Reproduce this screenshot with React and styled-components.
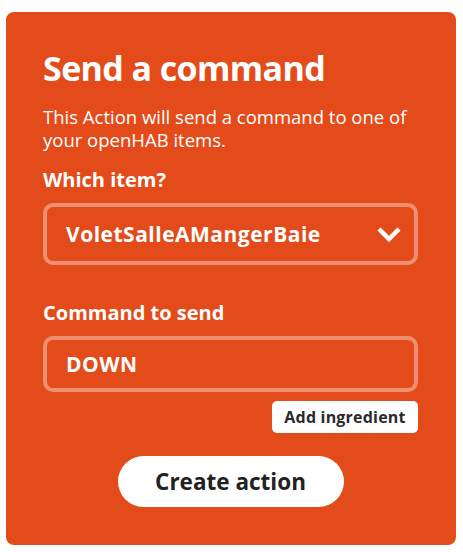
import React from 'react';
import styled, { createGlobalStyle } from 'styled-components';

const GlobalStyle = createGlobalStyle`
  html, body {
    margin: 0;
    padding: 0;
    background: #ffffff;
  }
  body {
    font-family: "Open Sans", Lato, "Liberation Sans", sans-serif;
    -webkit-font-smoothing: antialiased;
  }
`

const Page = styled.div`
  padding: 12px 7px 7px 6px;
`
const Card = styled.form`
  background: #e44b1a;
  border-radius: 8px;
  padding: 36px 38px 38px 37px;
  color: #fff;
  display: flex;
  flex-direction: column;
`
const Heading = styled.h1`
  margin: 0;
  font-size: 34px;
  font-weight: 700;
  line-height: 40px;
  letter-spacing: -0.6px;
`
const Description = styled.p`
  margin: 17px 0 0;
  font-size: 18.5px;
  line-height: 23px;
`
const Label = styled.label`
  display: block;
  margin: ${p => p.$top}px 0 11px;
  font-size: 20px;
  font-weight: 700;
  line-height: 24px;
`
const Field = styled.div`
  box-sizing: border-box;
  height: ${p => p.$height}px;
  border: 4px solid rgba(255, 255, 255, 0.38);
  border-radius: 10px;
  display: flex;
  align-items: center;
  justify-content: space-between;
  padding: 0 13px 0 19px;
  font-size: 21px;
  font-weight: 700;
  letter-spacing: 0.5px;
`
const Chevron = styled.svg`
  width: 24px;
  height: 18px;
  display: block;
`
const IngredientRow = styled.div`
  display: flex;
  justify-content: flex-end;
  margin-top: 9px;
`
const SmallButton = styled.button`
  height: 32px;
  width: 146px;
  border: none;
  border-radius: 5px;
  background: #fff;
  color: #2a2a2a;
  font-family: inherit;
  font-size: 16px;
  font-weight: 700;
  letter-spacing: 0.2px;
  padding: 0;
`
const Submit = styled.button`
  align-self: center;
  margin-top: 23px;
  width: 226px;
  height: 51px;
  border: none;
  border-radius: 26px;
  background: #fff;
  color: #222;
  font-family: inherit;
  font-size: 22.5px;
  font-weight: 700;
  padding: 0;
`

export default function App() {
  return (
    <Page>
      <GlobalStyle />
      <Card onSubmit={e => e.preventDefault()}>
        <Heading>Send a command</Heading>
        <Description>This Action will send a command to one of your openHAB items.</Description>
        <Label $top={17}>Which item?</Label>
        <Field $height={62}>
          <span>VoletSalleAMangerBaie</span>
          <Chevron viewBox="0 0 24 18">
            <path d="M2 4 L12 14 L22 4" fill="none" stroke="#fff" strokeWidth="4.5" />
          </Chevron>
        </Field>
        <Label $top={36}>Command to send</Label>
        <Field $height={56}>
          <span>DOWN</span>
        </Field>
        <IngredientRow>
          <SmallButton type="button">Add ingredient</SmallButton>
        </IngredientRow>
        <Submit type="submit">Create action</Submit>
      </Card>
    </Page>
  );
}
